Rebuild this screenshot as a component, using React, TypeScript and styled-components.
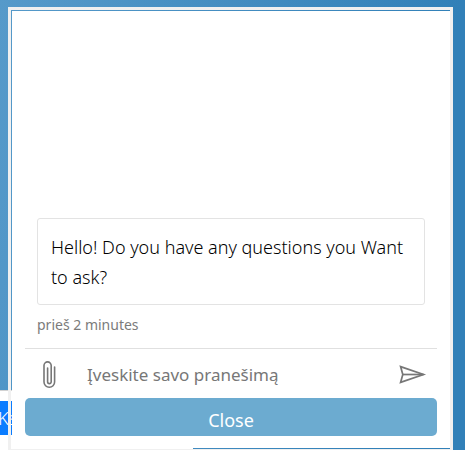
import React, { useState } from "react";
import styled, { createGlobalStyle } from "styled-components";

const GlobalStyle = createGlobalStyle`
  *, *::before, *::after { box-sizing: border-box; }
  body {
    margin: 0;
    overflow: hidden;
    font-family: "Noto Sans", "Open Sans", sans-serif;
    font-weight: 300;
  }
`;

const Page = styled.div`
  position: relative;
  height: 100vh;
  padding: 7px 12px 0 8px;
  overflow: hidden;
  background: linear-gradient(100deg, #569aca 0%, #3180b8 85%);
`;

const Backdrop = styled.div`
  position: absolute;
  left: 0;
  bottom: 0;
  width: 193px;
  height: 60px;
  padding-top: 10px;
  border-top: 1px solid #d2d2d2;
  background: #fff;
`;

const Selection = styled.div`
  width: fit-content;
  background: #0a7cff;
  color: #fff;
  font-size: 18px;
  line-height: 34px;
  text-indent: -2px;
`;

const Frame = styled.div`
  position: relative;
  height: calc(100% + 2px);
  padding: 1px 0 1px 1px;
  border: 3px solid #f0f0f0;
`;

const Chat = styled.section`
  display: flex;
  flex-direction: column;
  height: 100%;
  padding: 0 13px 12px;
  background: #fff;
`;

const Messages = styled.div`
  flex: 1;
  display: flex;
  flex-direction: column;
  justify-content: flex-end;
  padding: 0 12px 12px;
`;

const Bubble = styled.p`
  margin: 0;
  padding: 13px 13px 12px;
  border: 1px solid #e3e3e3;
  border-radius: 3px;
  color: #000;
  font-size: 18px;
  line-height: 30px;
`;

const Timestamp = styled.time`
  margin-top: 8px;
  color: #7b7b7b;
  font-size: 14px;
  font-weight: 400;
  line-height: 23px;
`;

const Composer = styled.form`
  display: flex;
  align-items: center;
  height: 50px;
  padding: 2px 10px 0 12px;
  border-top: 1px solid #e0e0e0;
`;

const IconButton = styled.button`
  display: flex;
  flex: none;
  padding: 0;
  border: 0;
  background: none;
  color: #777;
  cursor: pointer;
`;

const MessageInput = styled.input`
  flex: 1;
  min-width: 0;
  margin: 0 12px 0 24px;
  padding: 0;
  border: 0;
  outline: 0;
  background: none;
  color: #333;
  font: inherit;
  font-size: 17px;
  font-weight: 400;
  line-height: 30px;
  &::placeholder { color: #777; opacity: 1; }
`;

const CloseButton = styled.button`
  flex: none;
  height: 38px;
  padding: 5px 0 0;
  border: 0;
  border-radius: 5px;
  background: #6cabd0;
  color: #fff;
  font: inherit;
  font-size: 18px;
  font-weight: 400;
  line-height: 30px;
  cursor: pointer;
`;

const ClipIcon = () => (
  <svg width="26" height="30" viewBox="0 0 26 30" fill="none" stroke="currentColor" strokeWidth="1.6" strokeLinecap="round" aria-hidden="true">
    <path d="M17.6 7V22A5.3 5.3 0 0 1 7 22V5.5A3.6 3.6 0 0 1 14.2 5.5V21.8A1.8 1.8 0 0 1 10.6 21.8V8" />
  </svg>
);

const SendIcon = () => (
  <svg width="28" height="20" viewBox="0 0 28 20" fill="none" stroke="currentColor" strokeWidth="1.7" strokeLinejoin="miter" aria-hidden="true">
    <path d="M1.6 1.6L24.5 9.5L1.6 17.4L3.8 9.5Z" />
    <path d="M3.8 9.5H24.5" />
  </svg>
);

export default function App() {
  const [message, setMessage] = useState("");
  return (
    <>
      <GlobalStyle />
      <Page>
        <Backdrop>
          <Selection>Ks</Selection>
        </Backdrop>
        <Frame>
          <Chat>
            <Messages>
              <Bubble>Hello! Do you have any questions you Want to ask?</Bubble>
              <Timestamp>prieš 2 minutes</Timestamp>
            </Messages>
            <Composer onSubmit={(e) => e.preventDefault()}>
              <IconButton type="button" aria-label="Attach file"><ClipIcon /></IconButton>
              <MessageInput
                aria-label="Įveskite savo pranešimą"
                placeholder="Įveskite savo pranešimą"
                value={message}
                onChange={(e) => setMessage(e.target.value)}
              />
              <IconButton type="submit" aria-label="Send message"><SendIcon /></IconButton>
            </Composer>
            <CloseButton type="button">Close</CloseButton>
          </Chat>
        </Frame>
      </Page>
    </>
  );
}
